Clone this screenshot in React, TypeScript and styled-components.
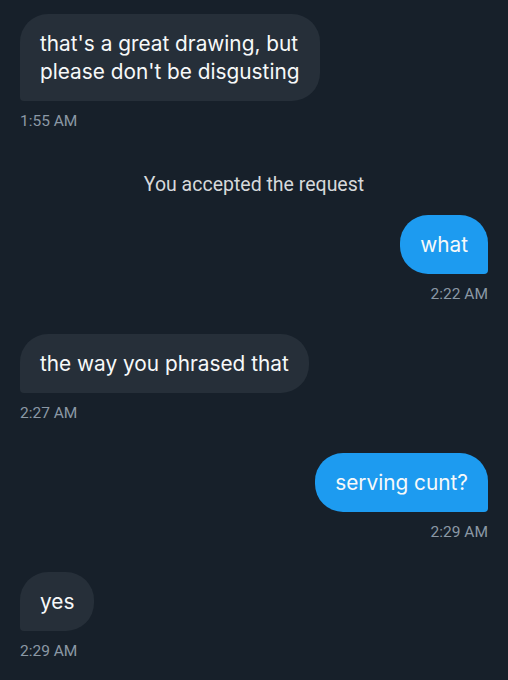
import { FC } from "react";
import styled, { createGlobalStyle } from "styled-components";

const GlobalStyle = createGlobalStyle`
  html, body {
    margin: 0;
    padding: 0;
    background-color: #17202a;
  }
`;

const Thread = styled.main`
  display: flex;
  flex-direction: column;
  width: 508px;
  height: 680px;
  box-sizing: border-box;
  padding: 14px 20px 0;
  background-color: #17202a;
  overflow: hidden;
`;

const Group = styled.div<{ $sent?: boolean; $gap: number }>`
  display: flex;
  flex-direction: column;
  align-items: ${({ $sent }) => ($sent ? "flex-end" : "flex-start")};
  margin-top: ${({ $gap }) => $gap}px;
`;

const Bubble = styled.div<{ $sent?: boolean }>`
  max-width: 300px;
  padding: 15.5px 20px;
  border-radius: 28px;
  ${({ $sent }) => ($sent ? "border-bottom-right-radius: 4px;" : "border-bottom-left-radius: 4px;")}
  background-color: ${({ $sent }) => ($sent ? "#1d9bf0" : "#262f39")};
  color: #f7f9f9;
  font-family: Inter, "Noto Sans", sans-serif;
  font-size: 20.8px;
  line-height: 28px;
  box-sizing: border-box;
`;

const Time = styled.div`
  margin-top: 9px;
  color: #8b98a5;
  font-family: Roboto, "Liberation Sans", sans-serif;
  font-size: 15.5px;
  line-height: 22px;
`;

const Notice = styled.div`
  margin-top: 41px;
  text-align: center;
  color: #d6d9db;
  font-family: Roboto, "Liberation Sans", sans-serif;
  font-size: 19.5px;
  line-height: 24px;
`;

type Message = { text: string; time: string; sent?: boolean; gap: number };

const before: Message[] = [
  { text: "that's a great drawing, but please don't be disgusting", time: "1:55 AM", gap: 0 },
];

const after: Message[] = [
  { text: "what", time: "2:22 AM", sent: true, gap: 18 },
  { text: "the way you phrased that", time: "2:27 AM", gap: 29 },
  { text: "serving cunt?", time: "2:29 AM", sent: true, gap: 29 },
  { text: "yes", time: "2:29 AM", gap: 29 },
];

const MessageGroup: FC<{ m: Message }> = ({ m }) => (
  <Group $sent={m.sent} $gap={m.gap}>
    <Bubble $sent={m.sent}>{m.text}</Bubble>
    <Time>{m.time}</Time>
  </Group>
);

const App: FC = () => (
  <>
    <GlobalStyle />
    <Thread>
      {before.map((m, i) => (
        <MessageGroup key={i} m={m} />
      ))}
      <Notice>You accepted the request</Notice>
      {after.map((m, i) => (
        <MessageGroup key={i} m={m} />
      ))}
    </Thread>
  </>
);

export default App;
